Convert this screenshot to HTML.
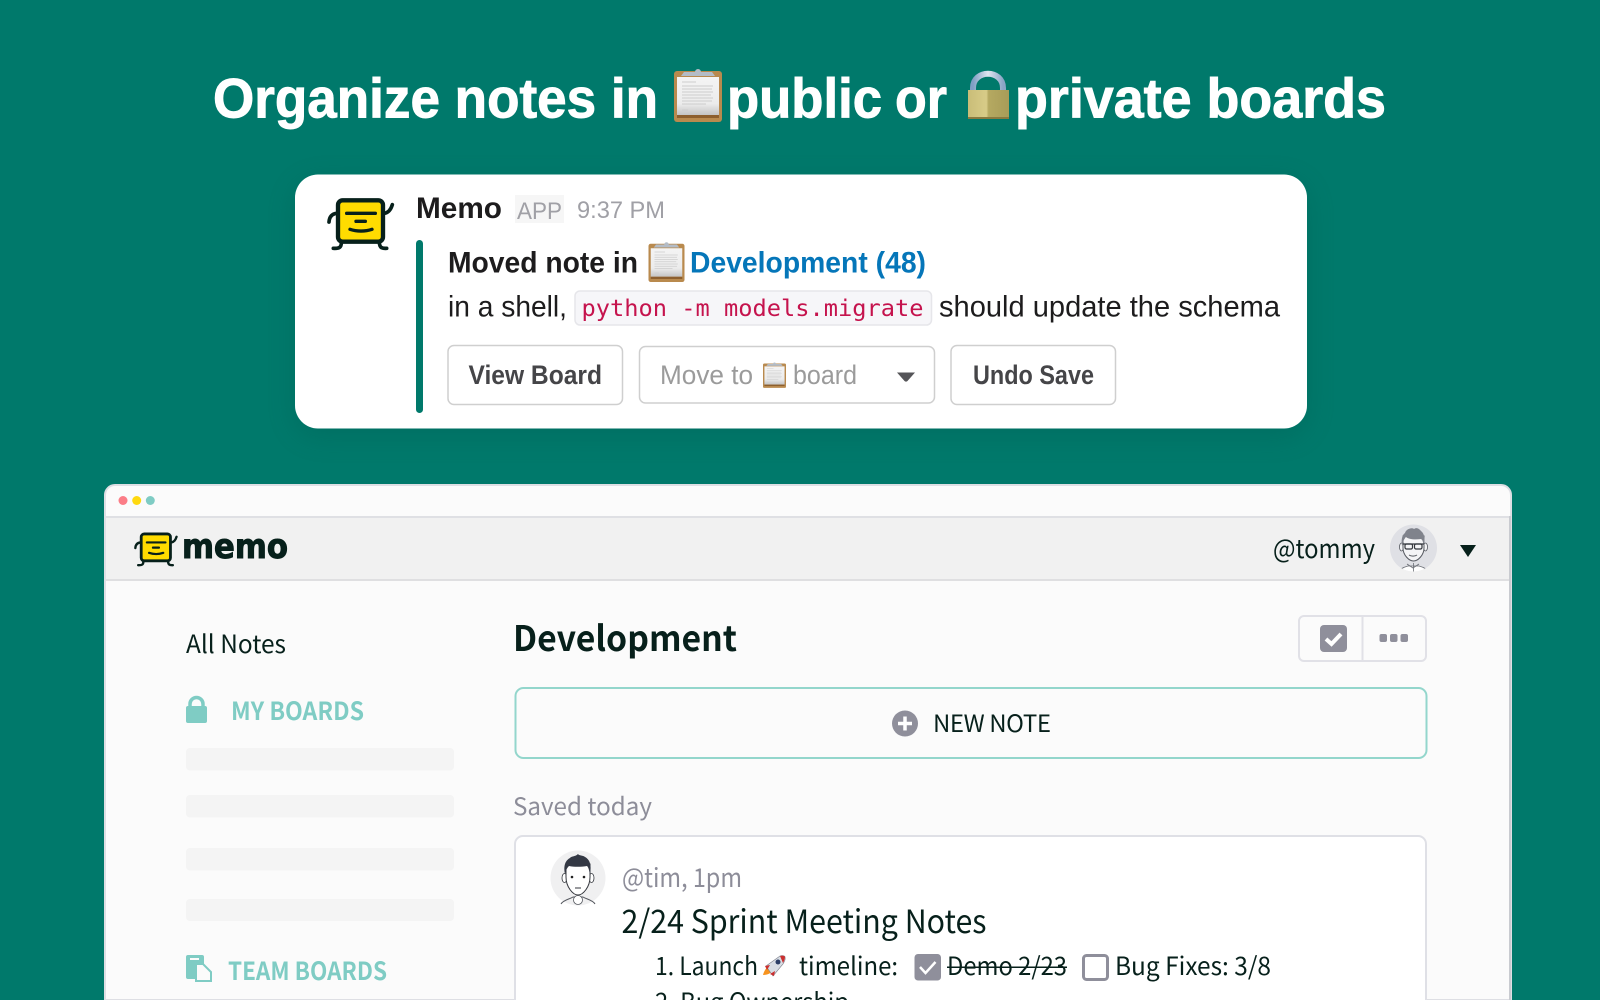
<!DOCTYPE html>
<html><head><meta charset="utf-8"><title>Memo</title>
<style>
html,body{margin:0;padding:0;background:#00796b;width:1600px;height:1000px;overflow:hidden}
svg{display:block}
text{white-space:pre}
.l{font-family:"Liberation Sans",sans-serif}
.f{font-family:"Noto Sans CJK JP","Liberation Sans",sans-serif}
.b{font-weight:700}
</style></head><body>
<svg width="1600" height="1000" viewBox="0 0 1600 1000" xmlns="http://www.w3.org/2000/svg">
<defs>
<linearGradient id="paper" x1="0" y1="0" x2="0" y2="1"><stop offset="0" stop-color="#f4f4f4"/><stop offset=".7" stop-color="#ececec"/><stop offset="1" stop-color="#c4c4c4"/></linearGradient>
<linearGradient id="brass" x1="0" y1="0" x2="1" y2="0"><stop offset="0" stop-color="#c9bd78"/><stop offset=".45" stop-color="#d8cc88"/><stop offset=".5" stop-color="#b5a961"/><stop offset="1" stop-color="#a89c58"/></linearGradient>
<linearGradient id="steel" x1="0" y1="0" x2="1" y2="0"><stop offset="0" stop-color="#7f9fc4"/><stop offset=".5" stop-color="#dfe6f0"/><stop offset="1" stop-color="#8aa5c6"/></linearGradient>
<filter id="sh" x="-10%" y="-20%" width="120%" height="140%"><feGaussianBlur stdDeviation="14"/></filter>
<clipPath id="ca1"><circle cx="1413.500" cy="548" r="23.500"/></clipPath>
<clipPath id="ca2"><circle cx="578" cy="878" r="27.500"/></clipPath>
<symbol id="clip" viewBox="0 0 48 56">
<rect x="0" y="5" width="48" height="51" rx="3" fill="#b98a4e"/>
<rect x="3" y="11" width="42" height="38" fill="url(#paper)"/>
<path d="M3 49h42v3H3z" fill="#8d5f2e"/>
<path d="M7 10l3-4h11a3 3 0 1 1 6 0h11l3 4z" fill="#b4bcc6"/>
<path d="M8 16h14M8 20h31M8 23h30M8 26h31M8 29h29M8 32h31M8 35h30M8 38h24M8 44h6" stroke="#cdcdcd" stroke-width="1"/>
</symbol>
<symbol id="mascot" viewBox="0 0 240 210">
<path d="M50 70C34 72 28 82 27 96M193 70c13-2 20-12 24-26M64 158c0 14-6 18-24 17M178 158c1 14 6 18 22 17" fill="none" stroke="#07201b" stroke-width="11" stroke-linecap="round"/>
<rect x="54" y="31" width="135" height="124" rx="14" fill="#ffdc00" stroke="#07201b" stroke-width="13"/>
<path d="M80 70h86M108 94h28M90 118c20 7 46 7 66 0" fill="none" stroke="#07201b" stroke-width="10" stroke-linecap="round"/>
</symbol>
</defs>

<!-- headline -->
<text class="l b" x="213" y="117.500" font-size="56" fill="#fff" stroke="#fff" stroke-width=".9" textLength="445" lengthAdjust="spacingAndGlyphs">Organize notes in</text>
<use href="#clip" x="674" y="66" width="48" height="56"/>
<text class="l b" x="727" y="117.500" font-size="56" fill="#fff" stroke="#fff" stroke-width=".9" textLength="155" lengthAdjust="spacingAndGlyphs">public</text>
<text class="l b" x="895" y="117.500" font-size="56" fill="#fff" stroke="#fff" stroke-width=".9" textLength="52" lengthAdjust="spacingAndGlyphs">or</text>
<path d="M973 98V88c0-19 30-19 30 0v10" fill="none" stroke="url(#steel)" stroke-width="6"/>
<rect x="968" y="90" width="41" height="29" fill="url(#brass)"/>
<rect x="968" y="117" width="41" height="2" fill="#8a7a3f"/>
<text class="l b" x="1015" y="117.500" font-size="56" fill="#fff" stroke="#fff" stroke-width=".9" textLength="371" lengthAdjust="spacingAndGlyphs">private boards</text>

<!-- message card -->
<rect x="295" y="182" width="1012" height="254" rx="24" fill="#00493f" opacity=".22" filter="url(#sh)"/>
<rect x="295" y="174.500" width="1012" height="254" rx="23" fill="#fff"/>
<use href="#mascot" x="320" y="190" width="80" height="70"/>
<text class="l b" x="416" y="218" font-size="30" fill="#1d1c1d" textLength="86" lengthAdjust="spacingAndGlyphs">Memo</text>
<rect x="515" y="195" width="49" height="28" fill="#f6f6f6"/>
<text class="l" x="517" y="219" font-size="24" fill="#a0a0a6" textLength="45" lengthAdjust="spacingAndGlyphs">APP</text>
<text class="l" x="577" y="218" font-size="24" fill="#a0a0a6" textLength="88" lengthAdjust="spacingAndGlyphs">9:37 PM</text>
<rect x="416" y="240" width="7" height="173" rx="3.500" fill="#00796b"/>
<text class="l b" x="448" y="272.500" font-size="29.500" fill="#1d1c1d" textLength="190" lengthAdjust="spacingAndGlyphs">Moved note in</text>
<use href="#clip" x="648" y="240" width="37" height="42"/>
<text class="l b" x="690" y="272.500" font-size="29.500" fill="#0576b9" textLength="236" lengthAdjust="spacingAndGlyphs">Development (48)</text>
<text class="l" x="448" y="316.500" font-size="29.500" fill="#1d1c1d" textLength="119" lengthAdjust="spacingAndGlyphs">in a shell,</text>
<rect x="575" y="291" width="356.500" height="34" rx="5" fill="#f6f6f9" stroke="#e6e6ea" stroke-width="1.500"/>
<text font-family="'DejaVu Sans Mono',monospace" x="581.500" y="316" font-size="23.500" fill="#c5134d" textLength="342" lengthAdjust="spacingAndGlyphs">python -m models.migrate</text>
<text class="l" x="939" y="316.500" font-size="29.500" fill="#1d1c1d" textLength="341" lengthAdjust="spacingAndGlyphs">should update the schema</text>

<rect x="448" y="345.500" width="174.500" height="59" rx="6" fill="#fff" stroke="#cfcfcf" stroke-width="1.500"/>
<text class="l b" x="468.500" y="384" font-size="26.500" fill="#454548" textLength="133.500" lengthAdjust="spacingAndGlyphs">View Board</text>
<rect x="639.500" y="346.500" width="295" height="56.500" rx="6" fill="#fff" stroke="#cfcfcf" stroke-width="1.500"/>
<text class="l" x="660" y="384" font-size="26.500" fill="#9b9b9b" textLength="93" lengthAdjust="spacingAndGlyphs">Move to</text>
<use href="#clip" x="763" y="361" width="23" height="27"/>
<text class="l" x="793" y="384" font-size="26.500" fill="#9b9b9b" textLength="64" lengthAdjust="spacingAndGlyphs">board</text>
<path d="M897 372.500h18l-7.500 8.500a2 2 0 0 1-3 0z" fill="#555559"/>
<rect x="951" y="345.500" width="164.500" height="59" rx="6" fill="#fff" stroke="#cfcfcf" stroke-width="1.500"/>
<text class="l b" x="973" y="384" font-size="26.500" fill="#454548" textLength="121" lengthAdjust="spacingAndGlyphs">Undo Save</text>

<!-- window -->
<path d="M105 1000V495a10 10 0 0 1 10-10h1386a10 10 0 0 1 10 10v505z" fill="#fbfbfb" stroke="#dedfe4" stroke-width="2"/>
<circle cx="123" cy="500.500" r="4.500" fill="#fb7d87"/>
<circle cx="136.700" cy="500.500" r="4.500" fill="#ffd90f"/>
<circle cx="150.300" cy="500.500" r="4.500" fill="#7fccc4"/>
<rect x="106" y="516" width="1404" height="65" fill="#f1f1f1"/>
<rect x="106" y="516" width="1404" height="2" fill="#dfe0e4"/>
<rect x="106" y="579" width="1404" height="2" fill="#dfdfe1"/>
<rect x="1509" y="516" width="2" height="484" fill="#c9cbd0"/>
<use href="#mascot" x="129.500" y="526.500" width="52" height="47"/>
<text font-family="'DejaVu Sans',sans-serif" font-weight="700" x="182" y="558" font-size="34" fill="#07201b" stroke="#07201b" stroke-width="1" textLength="106" lengthAdjust="spacingAndGlyphs">memo</text>
<text class="f" x="1273" y="558" font-size="26" fill="#07201b" textLength="102" lengthAdjust="spacingAndGlyphs">@tommy</text>

<!-- tommy avatar -->
<circle cx="1413.500" cy="548" r="23.500" fill="#dfe0e5"/>
<g clip-path="url(#ca1)">
<path d="M1396 575c1-5 8-8 12-9h11c4 1 11 4 12 9z" fill="#fff" stroke="#6b6e75" stroke-width=".8"/>
<path d="M1413.500 563v13M1407 564l6 4 6-4" fill="none" stroke="#6b6e75" stroke-width=".8"/>
<ellipse cx="1401.500" cy="547" rx="2" ry="4" fill="#f4f4f6" stroke="#55585f" stroke-width=".8"/>
<ellipse cx="1425.500" cy="547" rx="2" ry="4" fill="#f4f4f6" stroke="#55585f" stroke-width=".8"/>
<path d="M1403 536v12c0 7 6 13 10.500 13s10.500-6 10.500-13v-12z" fill="#f4f4f6" stroke="#55585f" stroke-width="1"/>
<path d="M1402 546c-1-6 0-11 3-13 1-4 7-6 9-4 3-2 5 0 7 2 4 3 4 9 3 15-1-3-1-6-3-7-7 1-13 0-15-2-2 2-3 5-4 9z" fill="#80838c"/>
<path d="M1403 544h21" stroke="#33363c" stroke-width="1.200"/>
<rect x="1405" y="544" width="7.500" height="5" rx="1.500" fill="none" stroke="#33363c" stroke-width="1.200"/>
<rect x="1414.500" y="544" width="7.500" height="5" rx="1.500" fill="none" stroke="#33363c" stroke-width="1.200"/>
<path d="M1409 555c2 1.500 6 1.500 8 0" fill="none" stroke="#55585f"/>
</g>
<path d="M1460 545h16l-8 12z" fill="#07201b"/>

<!-- sidebar -->
<text class="f" x="186" y="653" font-size="25" fill="#07201b" textLength="100" lengthAdjust="spacingAndGlyphs">All Notes</text>
<path d="M190 707v-3a6.500 6.500 0 0 1 13 0v3" fill="none" stroke="#7fccc4" stroke-width="3.500"/>
<rect x="186" y="706" width="21" height="17" rx="2" fill="#7fccc4"/>
<text class="f b" x="231" y="720" font-size="25" fill="#7fccc4" textLength="133" lengthAdjust="spacingAndGlyphs">MY BOARDS</text>
<rect x="186" y="748" width="268" height="22.500" rx="4" fill="#f4f4f4"/>
<rect x="186" y="795" width="268" height="22.500" rx="4" fill="#f4f4f4"/>
<rect x="186" y="848" width="268" height="22.500" rx="4" fill="#f4f4f4"/>
<rect x="186" y="899" width="268" height="22" rx="4" fill="#f4f4f4"/>
<rect x="186" y="955" width="18" height="24" rx="2" fill="#7fccc4"/>
<rect x="190" y="958" width="9" height="2" fill="#fbfbfb"/>
<path d="M196 964h7l8 8v9h-15z" fill="#fbfbfb" stroke="#7fccc4" stroke-width="2"/>
<text class="f b" x="228" y="980" font-size="25" fill="#7fccc4" textLength="159" lengthAdjust="spacingAndGlyphs">TEAM BOARDS</text>

<!-- main -->
<text class="f b" x="513" y="651" font-size="35" fill="#07201b" textLength="224" lengthAdjust="spacingAndGlyphs">Development</text>
<rect x="1299" y="616" width="127" height="45" rx="5" fill="#fbfbfb" stroke="#e1e1e7" stroke-width="2"/>
<rect x="1361.500" y="616" width="2" height="45" fill="#e1e1e7"/>
<rect x="1320" y="625" width="27" height="27" rx="4" fill="#8f8f9b"/>
<path d="M1326 639l5.500 5 9.500-10" fill="none" stroke="#fff" stroke-width="4"/>
<rect x="1379.500" y="634" width="7.500" height="8" rx="2" fill="#8f8f9b"/>
<rect x="1390" y="634" width="7.500" height="8" rx="2" fill="#8f8f9b"/>
<rect x="1400.500" y="634" width="7.500" height="8" rx="2" fill="#8f8f9b"/>
<rect x="515.500" y="688" width="911" height="70" rx="8" fill="#fbfbfb" stroke="#93d6cc" stroke-width="2"/>
<circle cx="905" cy="723.500" r="13" fill="#8f8f9b"/>
<path d="M905 716.500v14M898 723.500h14" stroke="#fff" stroke-width="3.500"/>
<text class="f" x="933" y="732" font-size="24" fill="#07201b" textLength="118" lengthAdjust="spacing">NEW NOTE</text>
<text class="f" x="513" y="815" font-size="24" fill="#8d8d99" textLength="139" lengthAdjust="spacingAndGlyphs">Saved today</text>

<!-- note card -->
<path d="M515 1002V844a8 8 0 0 1 8-8h895a8 8 0 0 1 8 8v158z" fill="#fff" stroke="#dfe0e6" stroke-width="2"/>
<circle cx="578" cy="878" r="27.500" fill="#f0f0f1"/>
<path d="M561 904c2-4 9-5 12-7h10c3 2 10 3 12 7" fill="none" stroke="#55585f" stroke-width="1"/>
<circle cx="578" cy="900" r="4.500" fill="#fff" stroke="#55585f" stroke-width=".8"/>
<ellipse cx="564.500" cy="878" rx="2.500" ry="4.500" fill="#fff" stroke="#33363c" stroke-width=".8"/>
<ellipse cx="591.500" cy="878" rx="2.500" ry="4.500" fill="#fff" stroke="#33363c" stroke-width=".8"/>
<path d="M566 864v13c0 10 7 18 12 18s12-8 12-18v-13z" fill="#fff" stroke="#33363c" stroke-width="1"/>
<path d="M565 874c-2-9 1-14 5-16 1-2 5-1 8-4 1 2 5 1 7 3 4 2 7 7 5 17-1-3-1-6-3-8-6 1-13 1-18 0-2 2-3 4-4 8z" fill="#333844"/>
<circle cx="572" cy="877" r="1.300" fill="#222"/><circle cx="584" cy="877" r="1.300" fill="#222"/>
<path d="M575 888h6" stroke="#33363c" stroke-width="1"/>
<text class="f" x="622" y="887" font-size="26" fill="#8d8d99" textLength="120" lengthAdjust="spacingAndGlyphs">@tim, 1pm</text>
<text class="f" x="621.500" y="933" font-size="32" fill="#07201b" textLength="365" lengthAdjust="spacingAndGlyphs">2/24 Sprint Meeting Notes</text>
<text class="f" x="655" y="975" font-size="25" fill="#07201b" textLength="103" lengthAdjust="spacingAndGlyphs">1. Launch</text>
<path d="M763 975c1-4 3-7 5-8l4 4c-1 2-4 4-9 4z" fill="#f7931e"/>
<path d="M766 966l14-10c3-1 5 0 5 1 1 3-1 5-2 7l-10 12z" fill="#d8dde4" stroke="#7b7f8a" stroke-width=".6"/>
<circle cx="778" cy="962" r="2.500" fill="#2c3e66"/>
<path d="M780 956c3-1 5 0 5 1 0 2-1 4-2 6z" fill="#cb2f2f"/>
<path d="M765 966l5-1-3 5zM774 976l1-5-5 3z" fill="#cb2f2f"/>
<text class="f" x="799" y="975" font-size="25" fill="#07201b" textLength="99" lengthAdjust="spacingAndGlyphs">timeline:</text>
<rect x="914.500" y="954" width="26.500" height="26.500" rx="3.500" fill="#8f8f9b"/>
<path d="M920 967l5.500 6 10-11" fill="none" stroke="#fff" stroke-width="2.500"/>
<text class="f" x="947" y="975" font-size="25" fill="#07201b" textLength="120" lengthAdjust="spacingAndGlyphs">Demo 2/23</text>
<rect x="947" y="966.500" width="120" height="1.500" fill="#07201b"/>
<rect x="1083.500" y="955.500" width="24" height="24" rx="3" fill="#fff" stroke="#8f8f9b" stroke-width="3"/>
<text class="f" x="1115" y="975" font-size="25" fill="#07201b" textLength="156" lengthAdjust="spacingAndGlyphs">Bug Fixes: 3/8</text>
<text class="f" x="655" y="1011" font-size="25" fill="#07201b" textLength="194" lengthAdjust="spacingAndGlyphs">2. Bug Ownership</text>
</svg>
</body></html>
